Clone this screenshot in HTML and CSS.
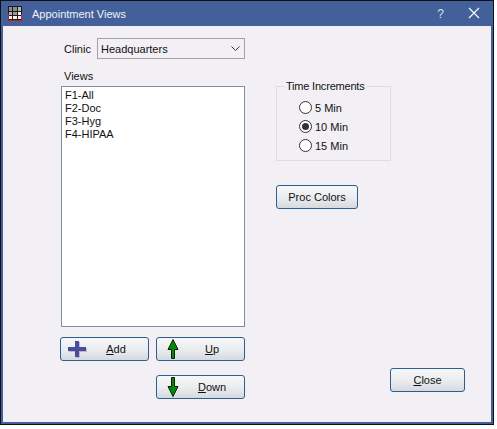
FILE: index.html
```html
<!DOCTYPE html>
<html lang="en">

<head>
    <meta charset="UTF-8">
    <title>Appointment Views</title>
    <link rel="stylesheet" href="styles.css">
</head>

<body>
    <div class="window">
        <div class="title-bar">
            <svg class="app-icon" width="14" height="15" viewBox="0 0 14 15">
                <rect width="14" height="15" fill="#1c1c1c"/>
                <path d="M1 1h3v4H1zM5 1h4v4H5z" fill="#8c8c8c"/>
                <path d="M10 1h3v4h-3zM1 6h3v3H1z" fill="#b4b4b4"/>
                <path d="M5 6h4v3H5z" fill="#9a9a9a"/>
                <path d="M10 6h3v3h-3zM1 10h3v3H1zM5 10h4v3H5zM10 10h3v3h-3z" fill="#f4f4f4"/>
                <path d="M0.500 8v6.500h13V8" fill="none" stroke="#d01818"/>
            </svg>
            <span class="title-text">Appointment Views</span>
            <span class="help-btn">?</span>
            <svg class="close-x" width="12" height="12" viewBox="0 0 12 12">
                <path d="M1 1l10 10M11 1L1 11" stroke="#fff" stroke-width="1.100"/>
            </svg>
        </div>
        <div class="content">
            <div class="left-col">
                <div class="clinic-row">
                    <span>Clinic</span>
                    <div class="combo">
                        <span>Headquarters</span>
                        <svg width="9" height="5" viewBox="0 0 9 5">
                            <path d="M0.500 0.500l4 4 4-4" fill="none" stroke="#333"/>
                        </svg>
                    </div>
                </div>
                <div class="views-label">Views</div>
                <div class="list-box">
                    <div>F1-All</div>
                    <div>F2-Doc</div>
                    <div>F3-Hyg</div>
                    <div>F4-HIPAA</div>
                </div>
                <div class="btn-grid">
                    <button class="btn icon-btn">
                        <span class="icon-slot">
                            <svg width="19" height="18" viewBox="0 0 19 18">
                                <path d="M8 2h4v6h7v4h-7v6H8v-6H1V8h7z" fill="#b9bcc4"/>
                                <path d="M7 1h4v6h7v4h-7v6H7v-6H0V7h7z" fill="#4c4c9c"/>
                            </svg>
                        </span>
                        <span class="btn-text"><u>A</u>dd</span>
                    </button>
                    <button class="btn icon-btn">
                        <span class="icon-slot arrow-slot">
                            <svg width="12" height="20" viewBox="0 0 12 20">
                                <path d="M6 0.500L11 10.500H7.500V19.500H4.500V10.500H1z" fill="#008a00" stroke="#062006"/>
                            </svg>
                        </span>
                        <span class="btn-text"><u>U</u>p</span>
                    </button>
                    <button class="btn icon-btn down-btn">
                        <span class="icon-slot arrow-slot">
                            <svg width="12" height="20" viewBox="0 0 12 20">
                                <path d="M6 19.500L11 9.500H7.500V0.500H4.500V9.500H1z" fill="#008a00" stroke="#062006"/>
                            </svg>
                        </span>
                        <span class="btn-text"><u>D</u>own</span>
                    </button>
                </div>
            </div>
            <div class="right-col">
                <fieldset class="increments">
                    <legend>Time Increments</legend>
                    <label class="radio-row"><span class="radio"></span>5 Min</label>
                    <label class="radio-row"><span class="radio checked"></span>10 Min</label>
                    <label class="radio-row"><span class="radio"></span>15 Min</label>
                </fieldset>
                <button class="btn proc-btn">Proc Colors</button>
                <button class="btn close-btn"><u>C</u>lose</button>
            </div>
        </div>
    </div>
</body>

</html>
```

FILE: styles.css
```css
html, body {
    margin: 0;
    height: 100%;
    background: #fff;
}

.window {
    width: 494px;
    height: 425px;
    box-sizing: border-box;
    background: #43609a;
    border: 1px solid #111;
    padding: 0 2px 2px 2px;
    display: flex;
    flex-direction: column;
    font-family: "Liberation Sans", Arial, sans-serif;
    font-size: 11px;
    color: #111;
}

.title-bar {
    height: 25px;
    flex: none;
    display: flex;
    align-items: center;
    color: #fff;
}

.app-icon {
    margin-left: 5px;
    flex: none;
}

.title-text {
    margin-left: 10px;
    color: #f0f2f8;
}

.help-btn {
    margin-left: auto;
    margin-right: 24px;
    font-size: 12px;
    color: #cfe0f5;
}

.close-x {
    margin-right: 11px;
    margin-bottom: 1px;
}

.content {
    flex: 1;
    background: #f2f0f5;
    display: flex;
    padding: 12px 0 0 58px;
}

.left-col {
    width: 184px;
    flex: none;
}

.clinic-row {
    display: flex;
    align-items: center;
    justify-content: space-between;
    margin-left: 3px;
}

.combo {
    width: 148px;
    height: 21px;
    box-sizing: border-box;
    border: 1px solid #a2a2a2;
    display: flex;
    align-items: center;
    justify-content: space-between;
    padding: 0 4px 0 3px;
    background: #f2f0f5;
}

.views-label {
    margin-top: 10px;
    margin-left: 3px;
    height: 15px;
    line-height: 15px;
}

.list-box {
    height: 241px;
    box-sizing: border-box;
    margin-top: 2px;
    border: 1px solid #7f8da5;
    background: #fff;
    padding: 2px 3px;
    line-height: 13px;
}

.btn-grid {
    display: grid;
    grid-template-columns: 89px 89px;
    column-gap: 7px;
    row-gap: 14px;
    margin-top: 10px;
    margin-left: -1px;
}

.btn {
    box-sizing: border-box;
    height: 24px;
    border: 1px solid #2c5f8e;
    border-radius: 3px;
    background: linear-gradient(#f7f7f9, #ecedf0 50%, #d5dadf);
    font-family: "Liberation Sans", Arial, sans-serif;
    font-size: 11px;
    color: #111;
    padding: 0;
}

.icon-btn {
    display: flex;
    align-items: center;
}

.icon-slot {
    flex: none;
    width: 33px;
    margin-right: -10px;
    display: flex;
    justify-content: center;
}

.arrow-slot {
    width: 31px;
    margin-right: -8px;
}

.btn-text {
    flex: 1;
    text-align: center;
    padding-bottom: 1px;
}

.down-btn {
    grid-column: 2;
}

.right-col {
    position: relative;
    flex: 1;
    padding: 42px 0 0 31px;
}

.increments {
    width: 115px;
    height: 81px;
    box-sizing: border-box;
    margin: 0;
    border: 1px solid #dcdcdf;
    padding: 5px 0 0 22px;
}

.increments legend {
    padding: 0 2px;
    margin-left: -15px;
    white-space: nowrap;
    line-height: 13px;
    letter-spacing: -0.2px;
}

.radio-row {
    display: flex;
    align-items: center;
    height: 19px;
    gap: 3px;
}

.radio {
    width: 11px;
    height: 11px;
    border: 1px solid #333;
    border-radius: 50%;
    background: #fff;
    position: relative;
}

.radio.checked::after {
    content: "";
    position: absolute;
    left: 2px;
    top: 2px;
    width: 7px;
    height: 7px;
    border-radius: 50%;
    background: #333;
}

.proc-btn {
    display: block;
    width: 82px;
    margin-top: 24px;
}

.close-btn {
    position: absolute;
    left: 145px;
    top: 330px;
    width: 75px;
}
```
